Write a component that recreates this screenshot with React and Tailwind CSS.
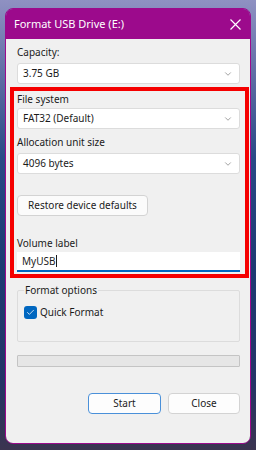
import { Check, ChevronDown } from "lucide-react";

const font = { fontFamily: '"Noto Sans", "Open Sans", sans-serif' };

function Select({ value }) {
  return (
    <div className="flex h-[21px] items-center justify-between rounded-[3px] border border-[#dcdcdc] bg-white pl-[5px] pr-[6px] text-[10px] text-[#1b1b1b]">
      <span>{value}</span>
      <ChevronDown size={10} strokeWidth={1.5} className="text-[#6a6a6a]" />
    </div>
  );
}

function Label({ children, className = "" }) {
  return <div className={"h-[16px] text-[10px] leading-[16px] text-[#1b1b1b] " + className}>{children}</div>;
}

export default function App() {
  return (
    <div
      className="h-[450px] w-[256px] overflow-hidden bg-[linear-gradient(180deg,#8f91c2_0%,#6d77ad_12%,#294a86_35%,#1d3a72_60%,#243466_85%,#3b3450_100%)] pl-[5px] pt-[8px]"
      style={font}
    >
      <div className="flex h-[436px] w-[246px] flex-col overflow-hidden rounded-[8px] border border-[#9c0a8c]">
        <div className="flex h-[30px] shrink-0 items-center justify-between bg-[#9c0a8c] pl-[8px] pr-[9px] text-white">
          <span className="text-[11px]">Format USB Drive (E:)</span>
          <svg width="11" height="11" viewBox="0 0 11 11" stroke="white" strokeWidth="1.2">
            <path d="M0.5 0.5 L10.5 10.5 M10.5 0.5 L0.5 10.5" />
          </svg>
        </div>
        <div className="flex flex-1 flex-col bg-[#f0f0f0] pl-[11px] pr-[10px] pt-[5px]">
          <Label className="mb-[3px]">Capacity:</Label>
          <Select value="3.75 GB" />

          <div className="ml-[-7px] mr-[-9px] mt-[3px] border-4 border-[#f50000] pb-[2px] pl-[3px] pr-[5px]">
            <Label className="mb-[1px]">File system</Label>
            <Select value="FAT32 (Default)" />
            <Label className="mb-[3px] mt-[5px]">Allocation unit size</Label>
            <Select value="4096 bytes" />
            <button className="mt-[21px] h-[21px] w-[131px] whitespace-nowrap rounded-[4px] border border-[#d3d3d3] bg-[#fbfbfb] text-[10px] text-[#1b1b1b]">
              Restore device defaults
            </button>
            <Label className="mb-[1px] mt-[19px]">Volume label</Label>
            <div className="flex h-[20px] items-center border-b-2 border-[#0067c0] bg-white pl-[5px] text-[10px] text-[#1b1b1b]">
              MyUSB<span className="ml-[1px] h-[12px] w-px bg-[#1b1b1b]" />
            </div>
          </div>

          <fieldset className="mt-[5px] h-[59px] rounded-[2px] border border-[#dcdcdc] pl-[6px]">
            <legend className="px-px text-[10px] leading-[14px] text-[#1b1b1b]">Format options</legend>
            <div className="mt-[8px] flex items-center gap-[3px]">
              <span className="flex h-[13px] w-[13px] items-center justify-center rounded-[3px] bg-[#0067c0]">
                <Check size={9} strokeWidth={2} className="text-white" />
              </span>
              <span className="text-[10px] text-[#1b1b1b]">Quick Format</span>
            </div>
          </fieldset>

          <div className="mt-[13px] h-[12px] rounded-[1px] border border-[#c4c4c4] bg-[#e6e6e6]" />

          <div className="mt-[26px] flex justify-end gap-[7px]">
            <button className="h-[21px] w-[73px] rounded-[4px] border border-[#4a90d9] bg-[#fdfdfd] text-[10px] text-[#1b1b1b]">
              Start
            </button>
            <button className="h-[21px] w-[72px] rounded-[4px] border border-[#d3d3d3] bg-[#fdfdfd] text-[10px] text-[#1b1b1b]">
              Close
            </button>
          </div>
        </div>
      </div>
    </div>
  );
}
